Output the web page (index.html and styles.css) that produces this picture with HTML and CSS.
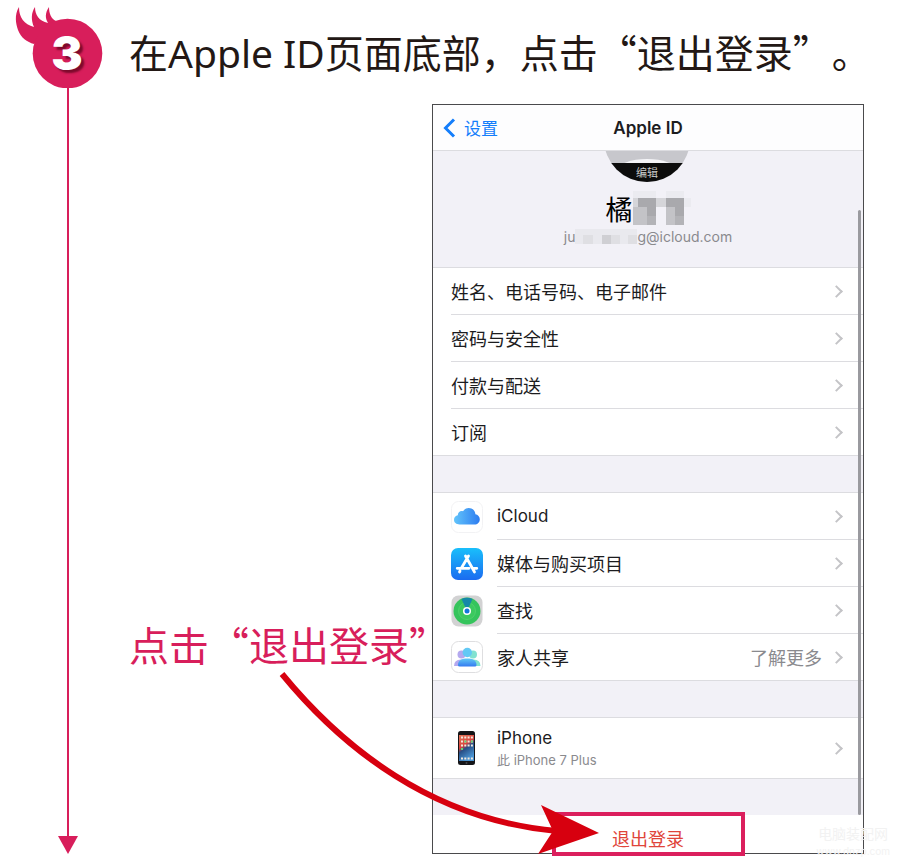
FILE: index.html
```
<!DOCTYPE html>
<html lang="zh-CN">

<head>
    <meta charset="UTF-8">
    <meta name="viewport" content="width=device-width, initial-scale=1.0">
    <title>退出 Apple ID</title>
    <link rel="stylesheet" href="styles.css">
</head>

<body>
    <main class="step">
        <div class="timeline">
            <svg class="badge" width="104" height="88" viewBox="0 0 104 88" role="img" aria-label="3">
                <path d="M19 7C14 15 16 24 18 30C21 38 27 42 34 44L60 30L56 21C51 19 49 13 49 7C45 13 45 18 48 23C39 21 35 15 35 7C31 13 31 20 34 27C24 24 19 18 19 7Z" />
                <circle cx="67.5" cy="53.5" r="34.8" />
                <text class="badge-number" x="67" y="70" text-anchor="middle">3</text>
            </svg>
            <div class="timeline-line"></div>
            <svg class="timeline-end" width="20" height="18" viewBox="0 0 20 18">
                <path d="M0 0H20L10 18Z" />
            </svg>
        </div>

        <div class="content">
            <h1>在<span class="latin">Apple ID</span>页面底部，点击“退出登录”。</h1>

            <div class="stage">
                <p class="callout">点击“退出登录”</p>

                <section class="phone">
                    <header class="nav">
                        <a href="#" class="back">
                            <svg width="13" height="20" viewBox="0 0 13 20"><path d="M11 1.5L2.5 10L11 18.5" /></svg>
                            设置
                        </a>
                        <h2>Apple ID</h2>
                    </header>

                    <div class="profile">
                        <svg class="avatar" width="86" height="31" viewBox="0 0 86 31">
                            <clipPath id="face"><circle cx="42" cy="-12" r="43" /></clipPath>
                            <g clip-path="url(#face)">
                                <rect width="86" height="31" fill="#c7c7cc" />
                                <ellipse cx="42" cy="19" rx="29" ry="11" fill="#f5f5f8" />
                                <rect y="12" width="86" height="19" fill="#0c0c0c" />
                            </g>
                            <text x="42" y="26" text-anchor="middle">编辑</text>
                        </svg>
                        <div class="name">
                            橘<svg width="58" height="34" viewBox="0 0 58 34" shape-rendering="crispEdges">
                                <path fill="#ebebf0" d="M0 0H23V7H0ZM33 0H51V7H33ZM51 7H58V16H51Z" />
                                <path fill="#d5d5d9" d="M0 7H5V16H0ZM23 7H33V16H23Z" />
                                <path fill="#c3c3c7" d="M0 16H14V34H0ZM33 16H42V34H33Z" />
                                <path fill="#a9a9ad" d="M5 7H23V16H5ZM14 16H23V25H14ZM33 7H51V16H33ZM42 16H51V25H42Z" />
                                <path fill="#b3b3b7" d="M14 25H23V34H14ZM42 25H51V34H42Z" />
                            </svg>
                        </div>
                        <div class="email">
                            ju<svg width="62" height="15" viewBox="0 0 62 15" shape-rendering="crispEdges">
                                <path fill="#e9e9ee" d="M0 0H62V15H0Z" />
                                <path fill="#dfdfe3" d="M8 6H18V15H8ZM36 6H45V15H36ZM53 6H62V15H53Z" />
                                <path fill="#cfcfd3" d="M27 6H36V15H27Z" />
                            </svg>g@icloud.com
                        </div>
                    </div>

                    <nav class="group">
                        <a href="#" class="row"><span>姓名、电话号码、电子邮件</span><i class="chevron"></i></a>
                        <a href="#" class="row"><span>密码与安全性</span><i class="chevron"></i></a>
                        <a href="#" class="row"><span>付款与配送</span><i class="chevron"></i></a>
                        <a href="#" class="row"><span>订阅</span><i class="chevron"></i></a>
                    </nav>

                    <nav class="group">
                        <a href="#" class="item">
                            <svg class="icon" viewBox="0 0 32 32">
                                <defs>
                                    <linearGradient id="cloud" x1="0" x2="1">
                                        <stop stop-color="#62c4fb" />
                                        <stop offset="1" stop-color="#2d7cf0" />
                                    </linearGradient>
                                </defs>
                                <rect x=".5" y=".5" width="31" height="31" rx="7" fill="#fff" stroke="#f2f2f4" />
                                <path fill="url(#cloud)" d="M8.500 23.500C5.200 23.500 3 21.500 3 18.800C3 16.300 4.700 14.500 6.800 14.200C6.800 11.300 9.300 9.500 12 10.300C13.300 8.200 15.200 7 17.700 7C21.500 7 24.200 9.700 24.400 13.300C26.900 13.700 28.800 15.700 28.800 18.200C28.800 21.300 26.500 23.500 23.500 23.500Z" />
                            </svg>
                            <div class="row"><span class="latin-label">iCloud</span><i class="chevron"></i></div>
                        </a>
                        <a href="#" class="item">
                            <svg class="icon" viewBox="0 0 32 32">
                                <defs>
                                    <linearGradient id="store" x2="0" y2="1">
                                        <stop stop-color="#19bffb" />
                                        <stop offset="1" stop-color="#1b6bf0" />
                                    </linearGradient>
                                </defs>
                                <rect width="32" height="32" rx="7" fill="url(#store)" />
                                <path d="M17.500 8L10.300 20.300M14.500 8L23.500 24M6.200 20.300H18M22 20.300H25.800M9 23L8.500 24" fill="none" stroke="#fff" stroke-width="2.800" stroke-linecap="round" />
                            </svg>
                            <div class="row"><span>媒体与购买项目</span><i class="chevron"></i></div>
                        </a>
                        <a href="#" class="item">
                            <svg class="icon" viewBox="0 0 32 32">
                                <rect x=".5" y=".5" width="31" height="31" rx="7" fill="#d2d2d3" />
                                <circle cx="16" cy="16" r="13.500" fill="#35c45c" />
                                <circle cx="16" cy="16" r="8.500" fill="#3cc95f" stroke="#4fd06c" />
                                <path d="M16 16L10.500 4Q16 1.500 21.500 4Z" fill="#1689a8" />
                                <circle cx="16" cy="16" r="4" fill="#fff" />
                                <circle cx="16" cy="16" r="2.500" fill="#1477dc" />
                            </svg>
                            <div class="row"><span>查找</span><i class="chevron"></i></div>
                        </a>
                        <a href="#" class="item">
                            <svg class="icon" viewBox="0 0 32 32">
                                <defs>
                                    <linearGradient id="family" x2="0" y2="1">
                                        <stop stop-color="#62c9f5" />
                                        <stop offset="1" stop-color="#347af0" />
                                    </linearGradient>
                                </defs>
                                <rect x=".5" y=".5" width="31" height="31" rx="7" fill="#fff" stroke="#dedee0" />
                                <g fill="#b4a9ef"><circle cx="10.500" cy="13.500" r="4" /><path d="M3 25Q3 18.500 10 18.500H14L9 25Z" /></g>
                                <g fill="#82e2d0"><circle cx="22" cy="13.500" r="4" /><path d="M29.500 25Q29.500 18.500 22.500 18.500H18L23 25Z" /></g>
                                <circle cx="16.300" cy="11.500" r="4.700" fill="#62c9f5" />
                                <path d="M7 24C7 19 11 17.500 16.300 17.500S25.500 19 25.500 24Q25.500 25.500 24 25.500H8.500Q7 25.500 7 24Z" fill="url(#family)" />
                            </svg>
                            <div class="row"><span>家人共享</span><small>了解更多</small><i class="chevron"></i></div>
                        </a>
                    </nav>

                    <nav class="group">
                        <a href="#" class="item device">
                            <svg class="icon device-icon" viewBox="0 0 32 36">
                                <defs>
                                    <linearGradient id="wallpaper" x2=".4" y2="1">
                                        <stop stop-color="#e4785a" />
                                        <stop offset=".45" stop-color="#d8443d" />
                                        <stop offset=".6" stop-color="#274f86" />
                                        <stop offset="1" stop-color="#4a94d2" />
                                    </linearGradient>
                                </defs>
                                <rect x="7" y="1" width="17" height="34" rx="2.500" fill="#151518" />
                                <rect x="8" y="5" width="15" height="26" fill="url(#wallpaper)" />
                                <path d="M10 7.500H22M10 11.500H22M10 15.500H22M10 28.500H22" stroke="#f3e9dd" stroke-width="2" stroke-dasharray="2 1.300" />
                                <path d="M13.300 11.500H22M10 19H15" stroke="#62d276" stroke-width="2" stroke-dasharray="2 4.600" />
                                <circle cx="15.500" cy="33" r="1" fill="#47474a" />
                            </svg>
                            <div class="row">
                                <span class="latin-label">iPhone<em>此 iPhone 7 Plus</em></span><i class="chevron"></i>
                            </div>
                        </a>
                    </nav>

                    <button type="button" class="sign-out">退出登录</button>

                    <div class="scrollbar"></div>
                    <div class="highlight"></div>
                    <div class="watermark"><strong>电脑装配网</strong><br>www.dnzp.com</div>
                    <svg class="arrow" width="330" height="190" viewBox="270 665 330 190">
                        <path d="M282 674C342 747 432 820 557 831" fill="none" stroke="#d7000f" stroke-width="6" />
                        <path d="M541 805L599 833L538 854L553 831Z" fill="#d7000f" />
                    </svg>
                </section>
            </div>
        </div>
    </main>
</body>

</html>
```
FILE: styles.css
```
* {
    box-sizing: border-box;
}

body {
    margin: 0;
    background: #fff;
    color: #1c1c1e;
    font-family: Inter, 'Noto Sans CJK SC', sans-serif;
}

h1,
h2,
p {
    margin: 0;
    font-weight: 400;
}

a {
    color: inherit;
    text-decoration: none;
}

.step {
    display: flex;
    padding-bottom: 9px;
}

.timeline {
    flex: none;
    width: 129px;
    display: flex;
    flex-direction: column;
}

.badge,
.timeline-end {
    display: block;
    flex: none;
    fill: #d81e5b;
}

.badge-number {
    fill: #fff;
    font-family: Inter, sans-serif;
    font-size: 47px;
    font-weight: 900;
    text-shadow: 3px 3px 2px #7d0a2c;
}

.timeline-line {
    flex: 1;
    width: 2px;
    margin-left: 67px;
    background: #d81e5b;
}

.timeline-end {
    margin-left: 58px;
}

.content {
    flex: 1;
    min-width: 0;
}

h1 {
    height: 104px;
    padding-top: 21px;
    color: #231815;
    font-family: 'Noto Sans CJK SC', sans-serif;
    font-size: 39px;
    line-height: 60px;
    white-space: nowrap;
    text-spacing-trim: space-all;
}

.latin {
    font-family: 'Noto Sans', sans-serif;
}

.stage {
    display: grid;
    grid-template-columns: minmax(0, 1fr) 432px;
    padding-right: 36px;
}

.callout {
    align-self: end;
    padding-bottom: 180px;
    color: #d81e5b;
    font-family: 'Noto Sans CJK SC', sans-serif;
    font-size: 40px;
    line-height: 60px;
    white-space: nowrap;
    text-spacing-trim: space-all;
}

/* phone screen */
.phone {
    position: relative;
    border: 1px solid #4a4a4c;
    background: #f2f1f7;
}

.nav {
    display: grid;
    grid-template-columns: 1fr auto 1fr;
    align-items: center;
    height: 46px;
    padding: 0 10px;
    border-bottom: 1px solid #dcdce0;
    background: #fdfdfe;
}

.nav h2 {
    font-size: 17px;
    font-weight: 600;
}

.back {
    display: flex;
    align-items: center;
    gap: 8px;
    color: #147efb;
    font-size: 17px;
}

.back svg {
    fill: none;
    stroke: #147efb;
    stroke-width: 3;
}

.profile {
    display: flex;
    flex-direction: column;
    align-items: center;
    height: 116px;
}

.avatar {
    display: block;
}

.avatar text {
    fill: #c8c8c8;
    font-size: 11px;
}

.name {
    display: flex;
    align-items: center;
    height: 36px;
    margin-top: 8px;
    color: #000;
    font-size: 27px;
}

.email {
    display: flex;
    align-items: center;
    height: 20px;
    color: #8a8a8e;
    font-size: 14px;
}

.group {
    margin-bottom: 36px;
    border-top: 1px solid #dcdce0;
    border-bottom: 1px solid #dcdce0;
    background: #fff;
    font-size: 18px;
}

.row {
    flex: 1;
    display: flex;
    align-items: center;
    height: 47px;
    margin-left: 18px;
    padding-right: 20px;
    border-bottom: 1px solid #dcdce0;
}

.row span {
    flex: 1;
}

.row .latin-label {
    font-size: 17px;
}

.group > :last-child.row,
.item:last-child .row {
    height: 46px;
    border-bottom: none;
}

.item {
    display: flex;
    align-items: center;
    padding-left: 18px;
}

.icon {
    flex: none;
    width: 32px;
    height: 32px;
}

.item .row {
    margin-left: 14px;
}

.row small {
    margin-right: 10px;
    color: #8a8a8e;
    font-size: 18px;
}

.chevron {
    width: 9px;
    height: 9px;
    margin-right: 2px;
    border-top: 2px solid #c4c4c7;
    border-right: 2px solid #c4c4c7;
    transform: rotate(45deg);
}

.device .device-icon {
    height: 36px;
}

.item.device:last-child .row {
    height: 60px;
}

.row em {
    display: block;
    color: #8a8a8e;
    font-size: 13px;
    font-style: normal;
    line-height: 20px;
}

.device span {
    line-height: 23px;
}

.sign-out {
    display: block;
    width: 100%;
    height: 38px;
    padding: 8px 0 0;
    border: none;
    background: #fff;
    color: #e0453a;
    font-family: inherit;
    font-size: 18px;
}

/* overlays */
.scrollbar {
    position: absolute;
    top: 105px;
    right: 2px;
    bottom: 38px;
    width: 3px;
    border-radius: 2px;
    background: #9a9a9f;
}

.highlight {
    position: absolute;
    right: 118px;
    bottom: -3px;
    width: 193px;
    height: 44px;
    border: 4px solid #db1f5d;
}

.watermark {
    position: absolute;
    right: -27px;
    bottom: -6px;
    color: #f2f2f2;
    font-size: 10px;
    line-height: 16px;
    text-align: center;
}

.watermark strong {
    font-size: 14px;
    font-weight: 400;
}

.arrow {
    position: absolute;
    right: 263px;
    bottom: -2px;
}
```
